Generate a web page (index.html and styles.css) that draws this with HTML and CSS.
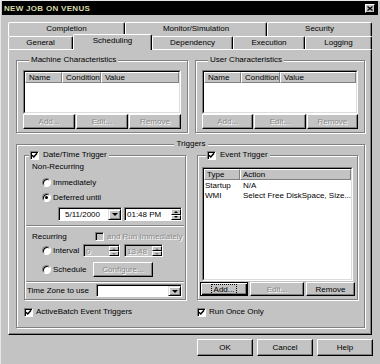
FILE: index.html
```html
<!DOCTYPE html>
<html lang="en">
<head>
    <meta charset="UTF-8">
    <meta name="viewport" content="width=device-width, initial-scale=1.0">
    <title>New Job on Venus</title>
    <link rel="stylesheet" href="styles.css">
</head>
<body>
    <div class="window">
        <div class="titlebar">
            <span class="title">NEW JOB ON VENUS</span>
            <span class="close-btn">
                <svg width="6" height="5" viewBox="0 0 6 5"><path d="M0.5 0.5L5.5 4.5M5.5 0.5L0.5 4.5" stroke="#000" stroke-width="1.3"/></svg>
            </span>
        </div>

        <!-- tabs, two rows -->
        <div class="tabs">
            <div class="tab-row back">
                <div class="tab tab-completion">Completion</div>
                <div class="tab tab-monitor">Monitor/Simulation</div>
                <div class="tab tab-security">Security</div>
            </div>
            <div class="tab-row front">
                <div class="tab tab-general">General</div>
                <div class="tab tab-scheduling active">Scheduling</div>
                <div class="tab tab-dependency">Dependency</div>
                <div class="tab tab-execution">Execution</div>
                <div class="tab tab-logging">Logging</div>
            </div>
        </div>

        <div class="panel">
            <div class="chars">
                <div class="group char-group machine">
                    <div class="group-label">Machine Characteristics</div>
                    <div class="list char-list">
                        <div class="list-body">
                            <div class="list-head">
                                <span class="col col-name">Name</span>
                                <span class="col col-cond">Condition</span>
                                <span class="col col-value">Value</span>
                            </div>
                        </div>
                    </div>
                    <div class="btn-row">
                        <button class="btn" disabled>Add...</button>
                        <button class="btn" disabled>Edit...</button>
                        <button class="btn" disabled>Remove</button>
                    </div>
                </div>

                <div class="group char-group user">
                    <div class="group-label">User Characteristics</div>
                    <div class="list char-list">
                        <div class="list-body">
                            <div class="list-head">
                                <span class="col col-name">Name</span>
                                <span class="col col-cond">Condition</span>
                                <span class="col col-value">Value</span>
                            </div>
                        </div>
                    </div>
                    <div class="btn-row">
                        <button class="btn" disabled>Add...</button>
                        <button class="btn" disabled>Edit...</button>
                        <button class="btn" disabled>Remove</button>
                    </div>
                </div>
            </div>

            <div class="group triggers">
                <div class="group-label center">Triggers</div>
                <div class="trigger-cols">

                    <div class="trigger-col left">
                        <div class="group dt-group">
                            <div class="group-label check-label">
                                <span class="check"><svg width="7" height="7" viewBox="0 0 7 7"><path d="M1 3.2L2.8 5L6 1.2" fill="none" stroke="#000" stroke-width="1.5"/></svg></span>
                                Date/Time Trigger
                            </div>

                            <div class="dt-section">
                                <div class="sub-title">Non-Recurring</div>
                                <div class="option"><span class="radio"></span>Immediately</div>
                                <div class="option"><span class="radio on"></span>Deferred until</div>
                                <div class="date-row">
                                    <div class="field date-field">
                                        <span class="field-text">5/11/2000</span>
                                        <span class="drop-btn"></span>
                                    </div>
                                    <div class="field time-field">
                                        <span class="field-text">01:48 PM</span>
                                        <span class="spinner"><span class="spin up"></span><span class="spin down"></span></span>
                                    </div>
                                </div>
                            </div>

                            <div class="sep"></div>

                            <div class="dt-section">
                                <div class="recur-head">
                                    <span class="recur-title">Recurring</span>
                                    <span class="check disabled"></span>
                                    <span class="disabled-text">and Run Immediately</span>
                                </div>
                                <div class="option interval-row">
                                    <span class="radio"></span>
                                    <span class="opt-label interval-label">Interval</span>
                                    <div class="field off num-field">
                                        <span class="field-text">0</span>
                                        <span class="spinner"><span class="spin up"></span><span class="spin down"></span></span>
                                    </div>
                                    <div class="field off clock-field">
                                        <span class="field-text">13:48</span>
                                        <span class="spinner"><span class="spin up"></span><span class="spin down"></span></span>
                                    </div>
                                </div>
                                <div class="option schedule-row">
                                    <span class="radio"></span>
                                    <span class="opt-label sched-label">Schedule</span>
                                    <button class="btn configure" disabled>Configure...</button>
                                </div>
                            </div>

                            <div class="sep"></div>

                            <div class="tz-row">
                                <span class="tz-label">Time Zone to use</span>
                                <div class="field tz-field">
                                    <span class="field-text"></span>
                                    <span class="drop-btn"></span>
                                </div>
                            </div>
                        </div>

                        <div class="check-line">
                            <span class="check"><svg width="7" height="7" viewBox="0 0 7 7"><path d="M1 3.2L2.8 5L6 1.2" fill="none" stroke="#000" stroke-width="1.5"/></svg></span>
                            ActiveBatch Event Triggers
                        </div>
                    </div>

                    <div class="trigger-col right">
                        <div class="group event-group">
                            <div class="group-label check-label">
                                <span class="check"><svg width="7" height="7" viewBox="0 0 7 7"><path d="M1 3.2L2.8 5L6 1.2" fill="none" stroke="#000" stroke-width="1.5"/></svg></span>
                                Event Trigger
                            </div>
                            <div class="list event-list">
                                <div class="list-body">
                                    <div class="list-head">
                                        <span class="col col-type">Type</span>
                                        <span class="col col-action">Action</span>
                                    </div>
                                    <div class="list-row first">
                                        <span class="cell-type">Startup</span>
                                        <span>N/A</span>
                                    </div>
                                    <div class="list-row">
                                        <span class="cell-type">WMI</span>
                                        <span>Select Free DiskSpace, Size...</span>
                                    </div>
                                </div>
                            </div>
                            <div class="event-btns">
                                <button class="btn default btn-add"><span class="focus">Add...</span></button>
                                <button class="btn btn-edit" disabled>Edit...</button>
                                <button class="btn btn-remove">Remove</button>
                            </div>
                        </div>

                        <div class="check-line">
                            <span class="check"><svg width="7" height="7" viewBox="0 0 7 7"><path d="M1 3.2L2.8 5L6 1.2" fill="none" stroke="#000" stroke-width="1.5"/></svg></span>
                            Run Once Only
                        </div>
                    </div>

                </div>
            </div>
        </div>

        <div class="footer">
            <button class="btn">OK</button>
            <button class="btn">Cancel</button>
            <button class="btn">Help</button>
        </div>
    </div>
</body>
</html>
```

FILE: styles.css
```css
* {
    box-sizing: border-box;
}

body {
    margin: 0;
    background: #c3c3c3;
    font-family: "Liberation Sans", Arial, sans-serif;
    font-size: 8px;
    color: #000;
}

.window {
    width: 380px;
    height: 364px;
    padding: 1px 2px 0 2px;
    background: #c3c3c3;
    box-shadow: inset 1px 1px #e6e6e6;
    overflow: hidden;
}

/* title bar */
.titlebar {
    display: flex;
    align-items: center;
    height: 14px;
    padding: 0 3px 0 2px;
    background: #000;
}

.title {
    color: #d9d9a8;
    font-weight: bold;
    letter-spacing: 0.3px;
}

.close-btn {
    display: flex;
    align-items: center;
    justify-content: center;
    width: 10px;
    height: 9px;
    margin-left: auto;
    background: #c3c3c3;
    border: 1px solid;
    border-color: #fff #000 #000 #fff;
}

/* tabs */
.tabs {
    margin: 7px 6px 0;
}

.tab-row {
    display: flex;
    align-items: stretch;
}

.tab-row.back {
    height: 14px;
}

.tab-row.front {
    height: 13px;
}

.tab {
    flex: none;
    text-align: center;
    line-height: 11px;
    border-top: 1px solid #fff;
    border-left: 1px solid #fff;
    border-right: 1px solid #000;
    border-radius: 2px 2px 0 0;
    box-shadow: inset -1px 0 #808080;
}

.tab-completion { width: 117px; }
.tab-monitor { width: 142px; }
.tab-security { width: 105px; }
.tab-general { width: 65px; }
.tab-scheduling { width: 79px; }
.tab-dependency { width: 81px; }
.tab-execution { width: 72px; }
.tab-logging { width: 67px; }

.tab.active {
    position: relative;
    z-index: 1;
    height: 16px;
    margin: -2px 0 -1px;
    background: #c3c3c3;
    line-height: 12px;
}

/* tab page */
.panel {
    height: 286px;
    margin: 0 6px;
    padding: 10px 6px 0 7px;
    border: 1px solid;
    border-color: #fff #000 #000 #fff;
    box-shadow: inset -1px -1px #808080;
}

.group {
    border: 1px solid #808080;
    box-shadow: inset 1px 1px #fff, 1px 1px #fff;
}

.group-label {
    width: max-content;
    margin: -6px 0 0 6px;
    padding: 0 2px;
    line-height: 10px;
    background: #c3c3c3;
}

.group-label.center {
    margin: -6px auto 0;
}

.check-label {
    display: flex;
    align-items: center;
    gap: 4px;
    margin-left: 4px;
    padding: 0 2px 0 1px;
}

.chars {
    display: flex;
    gap: 7px;
}

.char-group {
    padding: 0 6px 3px;
}

.machine {
    width: 172px;
}

.user {
    flex: 1;
}

/* list views */
.list {
    border: 1px solid;
    border-color: #808080 #fff #fff #808080;
}

.list-body {
    height: 100%;
    background: #fff;
    border: 1px solid;
    border-color: #000 #dcdcdc #dcdcdc #000;
}

.char-list {
    height: 44px;
    margin-top: 5px;
}

.list-head {
    display: flex;
    height: 11px;
}

.col {
    background: #c3c3c3;
    border: 1px solid;
    border-color: #fff #808080 #808080 #fff;
    padding-left: 3px;
    line-height: 9px;
}

.col-name { width: 37px; }
.col-cond { width: 39px; }
.col-value { flex: 1; }

.col-type {
    width: 36px;
    padding-left: 2px;
}

.col-action {
    flex: 1;
    padding-left: 2px;
}

.list-row {
    display: flex;
    line-height: 10px;
    padding-left: 1px;
    white-space: nowrap;
}

.list-row.first {
    margin-top: 1px;
}

.cell-type {
    flex: none;
    width: 38px;
}

/* buttons */
.btn {
    font: inherit;
    color: #000;
    padding: 0;
    background: #c3c3c3;
    border: 1px solid;
    border-color: #fff #000 #000 #fff;
    box-shadow: inset -1px -1px #808080;
}

.btn:disabled {
    color: #8a8a8a;
    text-shadow: 1px 1px #fff;
}

.btn.default {
    border-color: #000;
    box-shadow: inset 1px 1px #fff, inset -1px -1px #000, inset -2px -2px #808080;
}

.focus {
    outline: 1px dotted #000;
    padding: 0 2px;
}

.btn-row {
    display: flex;
    gap: 1px;
    height: 15px;
}

.btn-row .btn {
    flex: 1;
}

/* triggers */
.triggers {
    height: 184px;
    margin-top: 11px;
    padding: 0 6px 0 7px;
}

.trigger-cols {
    display: flex;
    gap: 11px;
    margin-top: 6px;
}

.trigger-col.left {
    width: 162px;
}

.trigger-col.right {
    flex: 1;
    min-width: 0;
}

.dt-group,
.event-group {
    height: 145px;
}

.dt-section {
    padding-left: 7px;
}

.sub-title {
    margin-top: 2px;
    line-height: 10px;
}

.option {
    display: flex;
    align-items: center;
    height: 10px;
    margin-top: 5px;
    padding-left: 10px;
}

.radio {
    flex: none;
    display: flex;
    align-items: center;
    justify-content: center;
    width: 9px;
    height: 9px;
    margin-right: 2px;
    border-radius: 50%;
    background: #fff;
    border: 1px solid;
    border-color: #808080 #fff #fff #808080;
    box-shadow: inset 1px 1px #000;
}

.radio.on::after {
    content: "";
    width: 3px;
    height: 3px;
    border-radius: 50%;
    background: #000;
}

.check {
    flex: none;
    display: flex;
    align-items: center;
    justify-content: center;
    width: 9px;
    height: 9px;
    background: #fff;
    border: 1px solid;
    border-color: #808080 #fff #fff #808080;
    box-shadow: inset 1px 1px #000;
}

.check.disabled {
    background: #c3c3c3;
}

.disabled-text {
    color: #8a8a8a;
    text-shadow: 1px 1px #fff;
    white-space: nowrap;
}

.date-row {
    display: flex;
    gap: 2px;
    height: 14px;
    margin-top: 5px;
    padding-left: 26px;
}

/* edit fields */
.field {
    display: flex;
    align-items: stretch;
    height: 100%;
    padding: 1px 0 0 1px;
    background: #fff;
    border: 1px solid;
    border-color: #808080 #fff #fff #808080;
    box-shadow: inset 1px 1px #000;
}

.field.off {
    background: #c3c3c3;
    color: #8a8a8a;
    text-shadow: 1px 1px #fff;
}

.field-text {
    flex: 1;
    display: flex;
    align-items: center;
    padding-left: 1px;
}

.date-field {
    width: 64px;
}

.date-field .field-text {
    padding-left: 5px;
}

.time-field {
    width: 58px;
}

.drop-btn {
    display: flex;
    align-items: center;
    justify-content: center;
    width: 13px;
    background: #c3c3c3;
    border: 1px solid;
    border-color: #dfdfdf #000 #000 #dfdfdf;
    box-shadow: inset 1px 1px #fff, inset -1px -1px #808080;
}

.drop-btn::after {
    content: "";
    border-left: 3px solid transparent;
    border-right: 3px solid transparent;
    border-top: 3px solid #000;
}

.spinner {
    display: flex;
    flex-direction: column;
    width: 10px;
}

.spin {
    flex: 1;
    display: flex;
    align-items: center;
    justify-content: center;
    background: #c3c3c3;
    border: 1px solid;
    border-color: #fff #000 #000 #fff;
}

.spin.up::after {
    content: "";
    border-left: 2px solid transparent;
    border-right: 2px solid transparent;
    border-bottom: 2px solid #000;
}

.spin.down::after {
    content: "";
    border-left: 2px solid transparent;
    border-right: 2px solid transparent;
    border-top: 2px solid #000;
}

.field.off .spin::after {
    border-top-color: #808080;
    border-bottom-color: #808080;
}

.sep {
    height: 2px;
    margin: 2px 1px 0;
    border-top: 1px solid #808080;
    border-bottom: 1px solid #fff;
}

.dt-section + .sep {
    margin-top: 4px;
}

.date-row + .sep {
    margin-top: 2px;
}

.recur-head {
    display: flex;
    align-items: center;
    height: 10px;
    margin-top: 4px;
}

.recur-title {
    width: 63px;
}

.recur-head .check {
    margin-right: 3px;
}

.interval-row {
    height: 13px;
    margin-top: 3px;
}

.interval-label {
    width: 30px;
}

.num-field {
    width: 37px;
}

.clock-field {
    width: 39px;
    margin-left: 4px;
}

.schedule-row {
    height: 15px;
    margin-top: 5px;
}

.sched-label {
    width: 40px;
}

.configure {
    width: 60px;
    height: 15px;
}

.tz-row {
    display: flex;
    align-items: center;
    height: 13px;
    margin-top: 1px;
    padding-left: 2px;
}

.tz-label {
    width: 69px;
}

.tz-field {
    width: 86px;
}

.event-group {
    padding: 0 4px;
}

.event-list {
    height: 114px;
    margin-top: 7px;
}

.event-btns {
    display: flex;
    gap: 2px;
    height: 14px;
    margin: 1px -2px 0;
}

.btn-add { width: 48px; }
.btn-edit { width: 54px; }
.btn-remove { width: 49px; }

.check-line {
    display: flex;
    align-items: center;
    gap: 3px;
    margin-top: 7px;
    line-height: 10px;
}

/* dialog buttons */
.footer {
    display: flex;
    justify-content: flex-end;
    gap: 4px;
    margin-top: 4px;
    padding-right: 5px;
}

.footer .btn {
    width: 56px;
    height: 17px;
}
```
